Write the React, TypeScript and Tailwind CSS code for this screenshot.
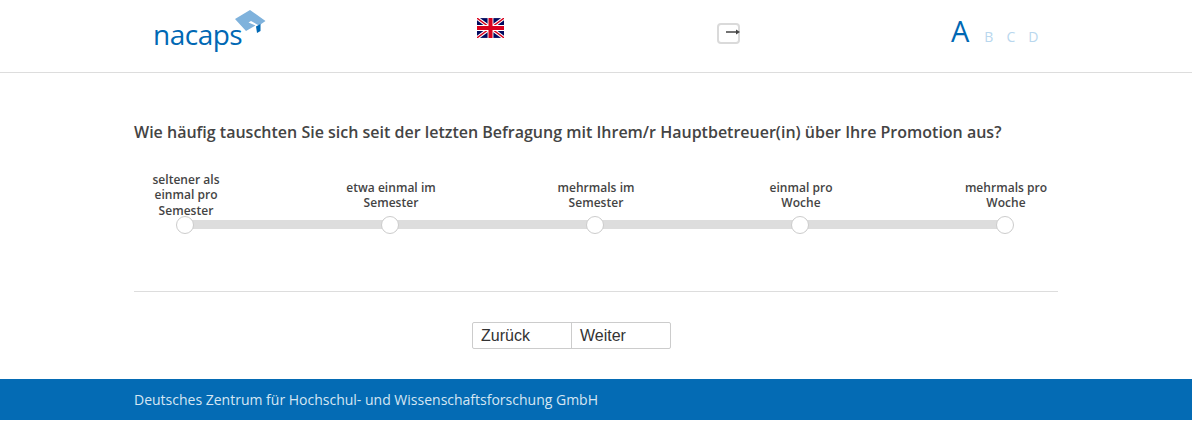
const options = ["seltener als einmal pro Semester", "etwa einmal im Semester", "mehrmals im Semester", "einmal pro Woche", "mehrmals pro Woche"]

function Flag() {
  return (
    <svg width="27" height="20" viewBox="0 0 60 44" aria-hidden="true" className="block">
      <rect width="60" height="44" fill="#00095f" />
      <path d="M0 0L60 44M60 0L0 44" stroke="#fff" strokeWidth="8" />
      <path d="M0 0L60 44M60 0L0 44" stroke="#d8001c" strokeWidth="3" />
      <path d="M30 0V44M0 22H60" stroke="#fff" strokeWidth="13" />
      <path d="M30 0V44M0 22H60" stroke="#d8001c" strokeWidth="9" />
    </svg>
  )
}

function Logo() {
  return (
    <div className="relative h-[40px] w-[112px]">
      <span className="absolute left-[-1px] top-[8px] text-[28px] font-medium leading-[30px] tracking-[-0.5px] text-[#0068b4]">nacaps</span>
      <svg width="42" height="28" viewBox="0 0 42 28" aria-hidden="true" className="absolute left-[70px] top-[-1px]">
        <path d="M11 9L26 0L41.5 11L35 15.5L27 11L24.5 12.5L31.5 15.5L22 21Z" fill="#7fb2dc" />
        <path d="M32 16.5L36.5 14V21L33 23Z" fill="#0068b4" />
      </svg>
    </div>
  )
}

export default function App() {
  return (
    <div className="min-h-[429px] bg-white font-['Open_Sans',sans-serif] text-[#444]">
      <header className="flex h-[73px] border-b border-[#dddddd] pl-[154px]">
        <div className="w-[323px] pt-[11px]">
          <Logo />
        </div>
        <div className="w-[240px] pt-[18px]">
          <Flag />
        </div>
        <div className="w-[234px] pt-[23px]">
          <div className="relative h-[21px] w-[23px] rounded-[4px] border-2 border-[#dadada]">
            <svg width="16" height="8" viewBox="0 0 16 8" aria-hidden="true" className="absolute left-[7px] top-[3px]">
              <path d="M0 4H11" stroke="#444" strokeWidth="1.5" />
              <path d="M10 1.5L14 4L10 6.5Z" fill="#444" />
            </svg>
          </div>
        </div>
        <div className="flex items-baseline pt-[11px] text-[#b9d7ee]">
          <span className="text-[29px] font-medium leading-[40px] text-[#0068b4]">A</span>
          <span className="ml-[15px] text-[14px]">B</span>
          <span className="ml-[13px] text-[14px]">C</span>
          <span className="ml-[13px] text-[14px]">D</span>
        </div>
      </header>

      <main className="mx-[134px] w-[924px]">
        <h1 className="mt-[48px] text-[16px] font-semibold leading-[22px]">
          Wie häufig tauschten Sie sich seit der letzten Befragung mit Ihrem/r Hauptbetreuer(in) über Ihre Promotion aus?
        </h1>

        <div className="relative mt-[29px] flex h-[62px] justify-between pl-px pr-[3px]">
          <div className="absolute bottom-[5px] left-[51px] h-[9px] w-[820px] bg-[#dddddd]" />
          {options.map((option) => (
            <div key={option} className="relative flex w-[100px] flex-col items-center">
              <div className="flex h-[46px] items-center pl-[2px]">
                <p className="text-center text-[12px] font-semibold leading-[15.5px] tracking-[0.03px]">{option}</p>
              </div>
              <div className="-mt-[2px] size-[18px] rounded-full border border-[#cccccc] bg-white" />
            </div>
          ))}
        </div>

        <div className="mt-[57px] border-t border-[#dddddd]" />

        <div className="mt-[30px] flex justify-center pr-[49px]">
          <div className="flex h-[27px] w-[199px] rounded-[2px] border border-[#cccccc] font-['Liberation_Sans',sans-serif] text-[16px] leading-[25px] text-[#333]">
            <span className="w-[99px] border-r border-[#cccccc] pl-[8px]">Zurück</span>
            <span className="pl-[8px]">Weiter</span>
          </div>
        </div>
      </main>

      <footer className="mt-[30px] h-[41px] bg-[#046bb4] pl-[134px] text-[14px] leading-[41px] text-[#d5e6f3]">
        Deutsches Zentrum für Hochschul- und Wissenschaftsforschung GmbH
      </footer>
    </div>
  )
}
